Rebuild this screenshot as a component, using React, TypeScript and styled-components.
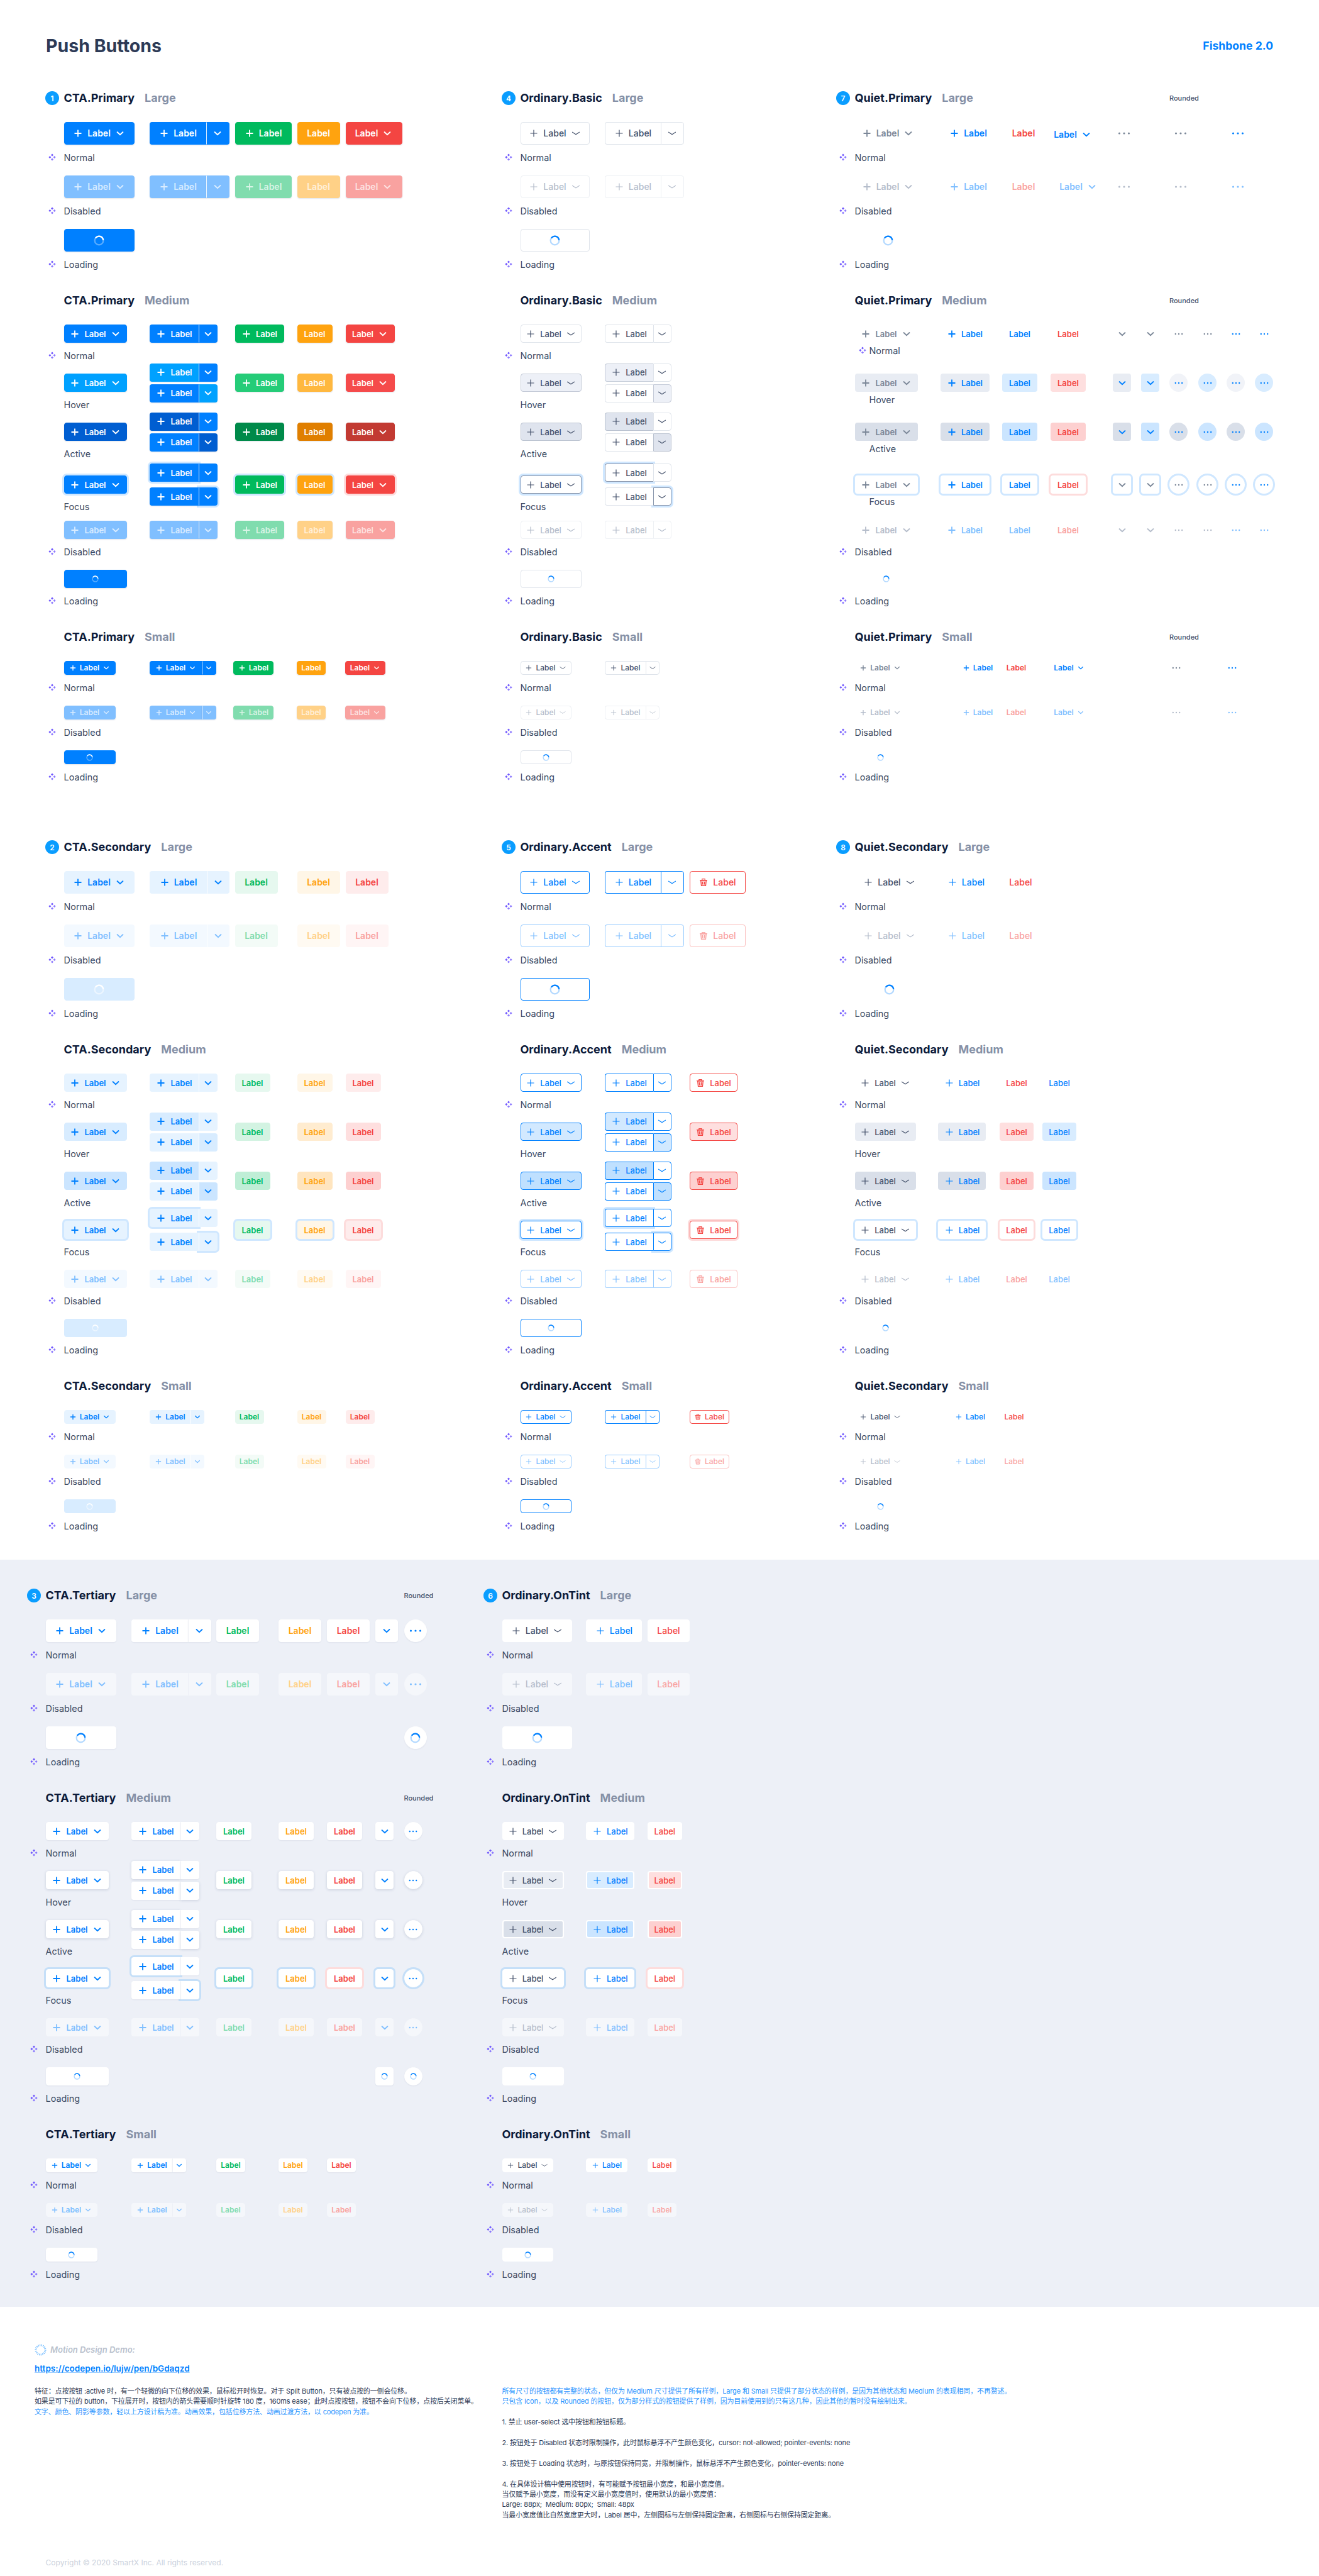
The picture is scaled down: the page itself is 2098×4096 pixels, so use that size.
import React from "react";
import styled, { createGlobalStyle } from "styled-components";

type Size = "large" | "medium" | "small";
type State = "normal" | "hover" | "active" | "focus" | "disabled" | "loading";
type Family = "cta" | "soft" | "white" | "basic" | "accent" | "quiet" | "quiet2" | "tint";
type Tone = "blue" | "green" | "orange" | "red" | "gray";
type Wash = Tone | "pale";

const sans = `Inter, "Noto Sans CJK SC", sans-serif`;

const tones = {
  blue: { main: "#0080ff", hover: "#00a1ff", press: "#005ed1", dim: "#80bfff", s0: "#e6f3ff", s1: "#d8ecff", s2: "#cbe5ff", s3: "#f3f9ff", ring: "#cfe7ff" },
  green: { main: "#00ba5d", hover: "#25cc78", press: "#008a4a", dim: "#80dcae", s0: "#e6f8ef", s1: "#d3f3e2", s2: "#bfeed6", s3: "#f3fbf7", ring: "#cfe7ff" },
  orange: { main: "#ffa30f", hover: "#ffb83f", press: "#e07f00", dim: "#ffd187", s0: "#fff6e7", s1: "#ffecd0", s2: "#ffe5bf", s3: "#fffaf2", ring: "#cfe7ff" },
  red: { main: "#f44542", hover: "#f54b4b", press: "#c23a32", dim: "#f9a2a0", s0: "#feecec", s1: "#fedfdf", s2: "#fdd0d0", s3: "#fff5f5", ring: "#fddcdc" },
  gray: { main: "#44516b", hover: "#e8ecf3", press: "#d9dfe9", dim: "#b5bdcb", s0: "#f1f3f8", s1: "#e8ecf3", s2: "#d9dfe9", s3: "#f5f7fb", ring: "#cfe7ff" },
};

const metrics = {
  large: { h: 36, font: 14, gap: 7, icon: 16, spin: 17 },
  medium: { h: 29, font: 13, gap: 7, icon: 16, spin: 11 },
  small: { h: 22, font: 12, gap: 5, icon: 12, spin: 11 },
};

interface Skin {
  bg: string;
  fg: string;
  bd: string;
  bw?: number;
  seam: string;
  ring?: string;
  shadow?: string;
  weight: number;
  thin?: boolean;
  spinTrack: string;
  spinArc: string;
}

const track = "#b3d9ff";
const softWash = (w: Wash, level: "s0" | "s1" | "s2") => {
  if (w === "pale") return level === "s1" ? "#f1f3f8" : "#d9dfe9";
  return tones[w][level];
};

const skin = (family: Family, tone: Tone, st: State, wash?: Wash): Skin => {
  const c = tones[tone];
  const ring = st === "focus" ? c.ring : undefined;
  switch (family) {
    case "cta": {
      const bg = st === "hover" ? c.hover : st === "active" ? c.press : st === "disabled" ? c.dim : c.main;
      return {
        bg,
        fg: st === "disabled" ? "rgba(255,255,255,.7)" : "#fff",
        bd: bg,
        seam: "rgba(255,255,255,.85)",
        ring,
        shadow: "0 1px 2px rgba(30,50,90,.14)",
        weight: 600,
        spinTrack: "rgba(255,255,255,.35)",
        spinArc: "#fff",
      };
    }
    case "soft": {
      const bg = st === "hover" ? c.s1 : st === "active" ? c.s2 : st === "disabled" ? c.s3 : st === "loading" ? c.s1 : c.s0;
      return { bg, fg: st === "disabled" ? c.dim : c.main, bd: bg, seam: "#fff", ring, weight: 600, spinTrack: "rgba(255,255,255,.5)", spinArc: "#fff" };
    }
    case "white": {
      const bg = st === "disabled" ? "#f5f7fb" : "#fff";
      return {
        bg,
        fg: st === "disabled" ? c.dim : c.main,
        bd: bg,
        seam: st === "disabled" ? "#edf0f7" : "#eef0f5",
        ring: st === "focus" ? (tone === "red" ? c.ring : "#c5dff8") : undefined,
        shadow: st === "hover" || st === "active" ? "0 1px 4px rgba(60,80,120,.2)" : st === "disabled" ? undefined : "0 1px 2px rgba(60,80,120,.08)",
        weight: 600,
        spinTrack: track,
        spinArc: tones.blue.main,
      };
    }
    case "basic": {
      const bg = st === "hover" ? "#edf0f7" : st === "active" ? "#dfe4ee" : "#fff";
      const bd = st === "hover" ? "#c4cbd8" : st === "active" ? "#bac2d0" : st === "focus" ? "#8a97ad" : st === "disabled" ? "#edf0f4" : "#dfe4eb";
      return { bg, fg: st === "disabled" ? "#b5bdcb" : "#44516b", bd, seam: bd, ring, weight: 500, thin: true, spinTrack: track, spinArc: tones.blue.main };
    }
    case "accent": {
      const bg = st === "hover" ? (tone === "red" ? c.s1 : "#d2e9ff") : st === "active" ? (tone === "red" ? c.s2 : "#bfe0ff") : "#fff";
      const bd = st === "disabled" ? (tone === "red" ? "#fbc0bf" : "#99ccff") : c.main;
      return { bg, fg: st === "disabled" ? c.dim : c.main, bd, seam: bd, ring, weight: 500, thin: true, spinTrack: track, spinArc: c.main };
    }
    case "tint": {
      const bg = st === "hover" ? (tone === "gray" ? "#e8ecf3" : c.s1) : st === "active" ? (tone === "gray" ? "#d9dfe9" : c.s2) : st === "disabled" ? "#f5f7fb" : "#fff";
      const hovered = st === "hover" || st === "active";
      return { bg, fg: st === "disabled" ? c.dim : c.main, bd: hovered ? "#fff" : bg, bw: hovered ? 2 : 1, seam: bg, ring: st === "focus" ? (tone === "red" ? c.ring : "#c5dff8") : undefined, weight: 500, thin: true, spinTrack: track, spinArc: tones.blue.main };
    }
    default: {
      const w = wash || tone;
      const bg = st === "hover" ? softWash(w, "s1") : st === "active" ? softWash(w, "s2") : st === "focus" ? "#fff" : "transparent";
      const soft = family === "quiet2";
      const ink = tone === "gray" ? (soft ? "#44516b" : "#7b8798") : c.main;
      return { bg, fg: st === "disabled" ? c.dim : ink, bd: "transparent", seam: "transparent", ring, weight: soft ? 500 : 600, thin: soft, spinTrack: track, spinArc: tones.blue.main };
    }
  }
};

const GlobalStyle = createGlobalStyle`
  html, body {
    margin: 0;
    padding: 0;
    background: #fff;
    font-family: ${sans};
  }
`;

const Page = styled.div`
  width: 2098px;
  height: 4096px;
  overflow: hidden;
  color: #44516b;
`;

const Header = styled.header`
  box-sizing: border-box;
  height: 144px;
  padding: 54px 73px 0;
  display: flex;
  justify-content: space-between;
  align-items: flex-start;
`;

const PageTitle = styled.h1`
  margin: 0;
  font-size: 28.5px;
  line-height: 38px;
  font-weight: 700;
  color: #2d3a56;
`;

const Brand = styled.div`
  font-size: 17.6px;
  line-height: 38px;
  font-weight: 700;
  color: #0080ff;
`;

const Columns = styled.div<{ $top?: number }>`
  display: grid;
  grid-template-columns: 726px 532px 1fr;
  padding-left: 72px;
  margin-top: ${(p) => p.$top || 0}px;
`;

const TintBand = styled.section`
  margin-top: 25px;
  padding: 45px 0 23px 43px;
  background: #edf0f7;
  display: grid;
  grid-template-columns: 726px 1fr;
`;

const Family = styled.div`
  display: flex;
  flex-direction: column;
  gap: 17px;
`;

const HeadRow = styled.div`
  display: grid;
  grid-template-columns: 22px 1fr;
  column-gap: 7.5px;
  height: 24px;
  margin-bottom: 26px;
  align-items: center;
`;

const Badge = styled.span`
  width: 22px;
  height: 22px;
  border-radius: 50%;
  background: #0a9dff;
  color: #fff;
  font-size: 12px;
  font-weight: 600;
  display: flex;
  align-items: center;
  justify-content: center;
`;

const HeadText = styled.div<{ $roundedAt?: number }>`
  grid-column: 2;
  display: grid;
  grid-template-columns: ${(p) => (p.$roundedAt ? `${p.$roundedAt}px auto` : "1fr")};
  align-items: center;
`;

const HeadTitle = styled.div`
  display: flex;
  gap: 16px;
  white-space: nowrap;
  font-size: 18px;
  line-height: 24px;
  font-weight: 700;
`;

const TitleMain = styled.span`
  color: #0d1b3a;
`;

const TitleSize = styled.span`
  color: #8590a6;
`;

const RoundedNote = styled.span`
  font-size: 11px;
  font-weight: 500;
  color: #44516b;
`;

const Row = styled.div<{ $h: number; $before?: number }>`
  display: grid;
  grid-template-columns: 22px 1fr;
  grid-template-rows: ${(p) => p.$h}px auto;
  column-gap: 7.5px;
  height: ${(p) => p.$h + 49}px;
  margin-top: ${(p) => p.$before || 0}px;
`;

const Cells = styled.div<{ $cols: string; $h: number }>`
  grid-column: 2;
  grid-row: 1;
  display: grid;
  grid-template-columns: ${(p) => p.$cols};
  grid-template-rows: ${(p) => p.$h}px;
  align-items: center;
  justify-items: start;
  height: ${(p) => p.$h}px;
`;

const MarkSlot = styled.div`
  grid-column: 1;
  grid-row: 2;
  display: flex;
  align-items: center;
  justify-content: center;
  height: 24px;
  margin-top: 8px;
`;

const StateText = styled.div<{ $indent?: boolean; $tight?: boolean; $marked?: boolean }>`
  grid-column: 2;
  grid-row: 2;
  display: flex;
  align-items: center;
  gap: 5px;
  height: 24px;
  margin-top: ${(p) => (p.$tight ? 0 : 8)}px;
  padding-left: ${(p) => (p.$indent ? (p.$marked ? 6 : 23) : 0)}px;
  font-size: 14.4px;
  color: #3c4a63;
`;

const Blank = styled.i``;

const Push = styled.button<{
  $skin: Skin;
  $w: number;
  $size: Size;
  $corner: "all" | "left" | "right" | "round";
  $dx?: number;
  $dy?: number;
}>`
  box-sizing: border-box;
  flex: none;
  position: relative;
  z-index: ${(p) => (p.$skin.ring ? 0 : 1)};
  display: inline-flex;
  align-items: center;
  justify-content: center;
  gap: ${(p) => metrics[p.$size].gap}px;
  width: ${(p) => p.$w}px;
  height: ${(p) => metrics[p.$size].h}px;
  padding: 0;
  border: ${(p) => p.$skin.bw || 1}px solid ${(p) => p.$skin.bd};
  border-radius: ${(p) =>
    p.$corner === "round" ? "50%" : p.$corner === "left" ? "4px 0 0 4px" : p.$corner === "right" ? "0 4px 4px 0" : "4px"};
  ${(p) => (p.$corner === "left" ? "border-right: 0;" : "")}
  ${(p) => (p.$corner === "right" ? `border-left-color: ${p.$skin.seam};` : "")}
  background: ${(p) => p.$skin.bg};
  color: ${(p) => p.$skin.fg};
  font-family: ${sans};
  font-size: ${(p) => metrics[p.$size].font}px;
  font-weight: ${(p) => p.$skin.weight};
  line-height: 16px;
  box-shadow: ${(p) => (p.$skin.ring ? `0 0 0 3px ${p.$skin.ring}` : p.$skin.shadow || "none")};
  transform: translate(${(p) => p.$dx || 0}px, ${(p) => p.$dy || 0}px);
`;

const SplitBox = styled.div`
  display: inline-flex;
`;

const Stack = styled.div<{ $gap: number }>`
  display: flex;
  flex-direction: column;
  gap: ${(p) => p.$gap}px;
`;

const Marker = () => (
  <svg width="12" height="12" viewBox="0 0 12 12">
    <g fill="#7058ff">
      <path d="M6 .4 8 2.4 6 4.4 4 2.4z" />
      <path d="M2.4 4 4.4 6 2.4 8 .4 6z" />
      <path d="M9.6 4 11.6 6 9.6 8 7.6 6z" opacity=".8" />
      <path d="M6 7.6 8 9.6 6 11.6 4 9.6z" opacity=".8" />
    </g>
  </svg>
);

const Plus = ({ size, thin }: { size: number; thin?: boolean }) => (
  <svg width={size} height={size} viewBox="0 0 16 16" fill="none" stroke="currentColor" strokeWidth={thin ? 1.2 : 1.8}>
    <path d="M8 2.5v11M2.5 8h11" />
  </svg>
);

const Chevron = ({ size, thin }: { size: number; thin?: boolean }) => (
  <svg width={size} height={size} viewBox="0 0 16 16" fill="none" stroke="currentColor" strokeWidth={thin ? 1.1 : 1.8} strokeLinecap="round">
    <path d={thin ? "M2.5 6.2 8 9.8l5.5-3.6" : "M3.5 6 8 10.2 12.5 6"} />
  </svg>
);

const Trash = ({ size }: { size: number }) => (
  <svg width={size} height={size} viewBox="0 0 16 16" fill="none" stroke="currentColor" strokeWidth="1.2">
    <path d="M2 4.6h12M5.8 4.4V2.6h4.4v1.8" />
    <path d="M3.6 4.8l.9 8.6h7l.9-8.6z" fill="currentColor" fillOpacity=".25" />
    <path d="M6.4 7l.2 4.4M9.6 7l-.2 4.4" />
  </svg>
);

const Dots = ({ large }: { large?: boolean }) =>
  large ? (
    <svg width="20" height="6" viewBox="0 0 20 6" fill="currentColor">
      <circle cx="2.5" cy="3" r="1.6" />
      <circle cx="10" cy="3" r="1.6" />
      <circle cx="17.5" cy="3" r="1.6" />
    </svg>
  ) : (
    <svg width="14" height="4" viewBox="0 0 14 4" fill="currentColor">
      <circle cx="1.8" cy="2" r="1.2" />
      <circle cx="7" cy="2" r="1.2" />
      <circle cx="12.2" cy="2" r="1.2" />
    </svg>
  );

const Spinner = ({ size, tint, arc }: { size: number; tint: string; arc: string }) => (
  <svg width={size} height={size} viewBox="0 0 18 18" fill="none" strokeWidth="2.4">
    <circle cx="9" cy="9" r="7.2" stroke={tint} />
    <path d="M3.6 4.2A7.2 7.2 0 0 1 16 7.4" stroke={arc} strokeLinecap="round" />
  </svg>
);

interface BtnProps {
  family: Family;
  tone?: Tone;
  st?: State;
  size: Size;
  w: number;
  plus?: boolean;
  caret?: boolean;
  trash?: boolean;
  dots?: boolean;
  icon?: boolean;
  round?: boolean;
  corner?: "left" | "right";
  wash?: Wash;
  dx?: number;
  dy?: number;
}

const Btn = ({ family, tone = "blue", st = "normal", size, w, plus, caret, trash, dots, icon, round, corner, wash, dx, dy }: BtnProps) => {
  const s = skin(family, tone, st, wash);
  const m = metrics[size];
  return (
    <Push $skin={s} $w={w} $size={size} $corner={round ? "round" : corner || "all"} $dx={dx} $dy={dy}>
      {st === "loading" ? (
        <Spinner size={m.spin} tint={s.spinTrack} arc={s.spinArc} />
      ) : (
        <>
          {plus && <Plus size={m.icon} thin={s.thin} />}
          {trash && <Trash size={m.icon} />}
          {!icon && !dots && "Label"}
          {caret && <Chevron size={m.icon} thin={s.thin} />}
          {dots && <Dots large={size === "large"} />}
        </>
      )}
    </Push>
  );
};

interface SplitProps {
  family: Family;
  size: Size;
  left: number;
  right: number;
  inner?: boolean;
  leftSt?: State;
  rightSt?: State;
}

const Split = ({ family, size, left, right, inner, leftSt = "normal", rightSt = "normal" }: SplitProps) => (
  <SplitBox>
    <Btn family={family} size={size} w={left} st={leftSt} corner="left" plus caret={inner} tone={family === "basic" ? "gray" : "blue"} />
    <Btn family={family} size={size} w={right} st={rightSt} corner="right" icon caret tone={family === "basic" ? "gray" : "blue"} />
  </SplitBox>
);

const splitCell = (family: Family, size: Size, left: number, right: number, st: State, inner?: boolean) => {
  if (st === "hover" || st === "active" || st === "focus") {
    return (
      <Stack $gap={st === "focus" ? 9 : 4}>
        <Split family={family} size={size} left={left} right={right} inner={inner} leftSt={st} />
        <Split family={family} size={size} left={left} right={right} inner={inner} rightSt={st} />
      </Stack>
    );
  }
  return <Split family={family} size={size} left={left} right={right} inner={inner} leftSt={st} rightSt={st} />;
};

interface RowSpec {
  st: State;
  cells: React.ReactNode[];
  before?: number;
  indent?: boolean;
  tight?: boolean;
}

const stateNames: Record<State, string> = {
  normal: "Normal",
  hover: "Hover",
  active: "Active",
  focus: "Focus",
  disabled: "Disabled",
  loading: "Loading",
};

const marked = (st: State) => st === "normal" || st === "disabled" || st === "loading";

interface SubProps {
  title: string;
  size: Size;
  badge?: number;
  roundedAt?: number;
  cols: number[];
  rows: RowSpec[];
}

const sizeNames: Record<Size, string> = { large: "Large", medium: "Medium", small: "Small" };

const Sub = ({ title, size, badge, roundedAt, cols, rows }: SubProps) => (
  <div>
    <HeadRow>
      {badge ? <Badge>{badge}</Badge> : <Blank />}
      <HeadText $roundedAt={roundedAt}>
        <HeadTitle>
          <TitleMain>{title}</TitleMain>
          <TitleSize>{sizeNames[size]}</TitleSize>
        </HeadTitle>
        {roundedAt ? <RoundedNote>Rounded</RoundedNote> : null}
      </HeadText>
    </HeadRow>
    {rows.map((r) => (
      <Row key={r.st} $h={metrics[size].h} $before={r.before}>
        <Cells $h={metrics[size].h} $cols={cols.map((c) => `${c}px`).join(" ")}>
          {r.cells.map((c, i) => (
            <React.Fragment key={i}>{c}</React.Fragment>
          ))}
        </Cells>
        {marked(r.st) && !r.indent && (
          <MarkSlot>
            <Marker />
          </MarkSlot>
        )}
        <StateText $indent={r.indent} $tight={r.tight} $marked={marked(r.st)}>
          {r.indent && marked(r.st) && <Marker />}
          {stateNames[r.st]}
        </StateText>
      </Row>
    ))}
  </div>
);

const shortStates: State[] = ["normal", "disabled", "loading"];
const allStates: State[] = ["normal", "hover", "active", "focus", "disabled", "loading"];
const statesOf = (size: Size) => (size === "medium" ? allStates : shortStates);

// the first block of each column has the focus row pushed down a little
const focusShift = (st: State) => (st === "focus" ? 6 : st === "disabled" ? -6 : 0);

const ctaDims = {
  cta: {
    large: { cols: [136, 136, 99, 77, 90], a: 112, l: 90, r: 37, g: 90, o: 68, e: 90 },
    medium: { cols: [136, 136, 99, 77, 78], a: 100, l: 78, r: 30, g: 78, o: 56, e: 78 },
    small: { cols: [136, 133.5, 101, 77, 64], a: 82, l: 83, r: 23, g: 64, o: 46, e: 64 },
  },
  soft: {
    large: { cols: [136, 136, 99, 77, 68], a: 112, l: 91, r: 36, g: 68, o: 68, e: 68 },
    medium: { cols: [136, 136, 99, 77, 56], a: 100, l: 78, r: 30, g: 56, o: 56, e: 56 },
    small: { cols: [136, 136, 99, 77, 46], a: 82, l: 65, r: 22, g: 46, o: 46, e: 46 },
  },
  white: {
    large: { cols: [136, 135.5, 99, 77, 77, 45.5, 40], a: 112, l: 90, r: 37, g: 68, o: 68, e: 68, x: 36 },
    medium: { cols: [136, 135.5, 99, 77, 77, 45.5, 40], a: 100, l: 78, r: 30, g: 56, o: 56, e: 56, x: 29 },
    small: { cols: [136, 135.5, 99, 77, 46], a: 82, l: 65, r: 22, g: 46, o: 46, e: 46 },
  },
};

const ctaRows = (family: "cta" | "soft" | "white", size: Size, shifted?: boolean): RowSpec[] =>
  statesOf(size).map((st) => {
    const d = ctaDims[family][size] as { cols: number[]; a: number; l: number; r: number; g: number; o: number; e: number; x?: number };
    const before = shifted ? focusShift(st) : 0;
    const solid = family === "cta";
    if (st === "loading") {
      const cells: React.ReactNode[] = [<Btn family={family} size={size} w={d.a} st={st} />];
      if (d.x) {
        cells.push(<Blank />, <Blank />, <Blank />, <Blank />);
        cells.push(size === "medium" ? <Btn family={family} size={size} w={d.x} st={st} icon /> : <Blank />);
        cells.push(<Btn family={family} size={size} w={d.x} st={st} round />);
      }
      return { st, cells, before };
    }
    const cells: React.ReactNode[] = [
      <Btn family={family} size={size} w={d.a} st={st} plus caret />,
      splitCell(family, size, d.l, d.r, st, solid && size === "small"),
      <Btn family={family} tone="green" size={size} w={d.g} st={st} plus={solid} />,
      <Btn family={family} tone="orange" size={size} w={d.o} st={st} />,
      <Btn family={family} tone="red" size={size} w={d.e} st={st} caret={solid} />,
    ];
    if (d.x) {
      cells.push(<Btn family={family} size={size} w={d.x} st={st} icon caret />);
      cells.push(<Btn family={family} size={size} w={d.x} st={st} dots round />);
    }
    return { st, cells, before };
  });

const ordDims = {
  large: { cols: [134, 135, 89], a: 110, l: 89, r: 37, t: 89 },
  medium: { cols: [134, 135, 76], a: 97, l: 77, r: 29, t: 76 },
  small: { cols: [134, 135, 63], a: 81, l: 65, r: 22, t: 63 },
};

const ordinaryRows = (family: "basic" | "accent", size: Size, shifted?: boolean): RowSpec[] =>
  statesOf(size).map((st) => {
    const d = ordDims[size];
    const tone: Tone = family === "basic" ? "gray" : "blue";
    const before = shifted ? focusShift(st) : 0;
    if (st === "loading") return { st, before, cells: [<Btn family={family} tone={tone} size={size} w={d.a} st={st} />] };
    const cells: React.ReactNode[] = [
      <Btn family={family} tone={tone} size={size} w={d.a} st={st} plus caret />,
      splitCell(family, size, d.l, d.r, st),
    ];
    if (family === "accent") cells.push(<Btn family={family} tone="red" size={size} w={d.t} st={st} trash />);
    return { st, before, cells };
  });

const tintDims = {
  large: { cols: [133.5, 98, 70], a: 111, b: 89, c: 67 },
  medium: { cols: [133.5, 98, 70], a: 98, b: 76.5, c: 54.5 },
  small: { cols: [133.5, 98, 70], a: 81, b: 66, c: 46 },
};

const tintRows = (size: Size): RowSpec[] =>
  statesOf(size).map((st) => {
    const d = tintDims[size];
    if (st === "loading") return { st, cells: [<Btn family="tint" tone="gray" size={size} w={d.a} st={st} />] };
    return {
      st,
      cells: [
        <Btn family="tint" tone="gray" size={size} w={d.a} st={st} plus caret />,
        <Btn family="tint" tone="blue" size={size} w={d.b} st={st} plus />,
        <Btn family="tint" tone="red" size={size} w={d.c} st={st} />,
      ],
    };
  });

const quietLargeRows: RowSpec[] = shortStates.map((st) => {
  const q = "quiet" as Family;
  if (st === "loading") return { st, cells: [<Btn family={q} tone="gray" size="large" w={105} st={st} />] };
  const normal = st === "normal";
  return {
    st,
    cells: [
      <Btn family={q} tone="gray" size="large" w={105} st={st} plus caret />,
      <Btn family={q} size="large" w={80} st={st} plus />,
      <Btn family={q} tone="red" size="large" w={56} st={st} />,
      <Btn family={q} size="large" w={80} st={st} caret dx={normal ? 0 : 9} dy={normal ? 2 : 0} />,
      <Btn family={q} tone="gray" size="large" w={36} st={st} dots />,
      <Btn family={q} tone="gray" size="large" w={36} st={st} dots />,
      <Btn family={q} size="large" w={36} st={st} dots />,
    ],
  };
});

const quietMediumRows: RowSpec[] = allStates.map((st) => {
  const q = "quiet" as Family;
  const size: Size = "medium";
  const lit = st === "hover" || st === "active";
  const iconTone: Tone = lit ? "blue" : "gray";
  const base = { st, before: focusShift(st), indent: st === "normal" || st === "hover" || st === "active" || st === "focus", tight: st === "normal" || st === "hover" || st === "active" || st === "focus" };
  if (st === "loading") return { ...base, cells: [<Btn family={q} tone="gray" size={size} w={100} st={st} />] };
  return {
    ...base,
    cells: [
      <Btn family={q} tone="gray" size={size} w={100} st={st} plus caret />,
      <Btn family={q} tone="blue" wash="gray" size={size} w={78} st={st} plus />,
      <Btn family={q} tone="blue" size={size} w={56} st={st} />,
      <Btn family={q} tone="red" size={size} w={56} st={st} />,
      <Btn family={q} tone={iconTone} wash="gray" size={size} w={29} st={st} icon caret />,
      <Btn family={q} tone={iconTone} wash="blue" size={size} w={29} st={st} icon caret />,
      <Btn family={q} tone={iconTone} wash="pale" size={size} w={29} st={st} dots round />,
      <Btn family={q} tone={iconTone} wash="blue" size={size} w={29} st={st} dots round />,
      <Btn family={q} tone="blue" wash="pale" size={size} w={29} st={st} dots round />,
      <Btn family={q} tone="blue" wash="blue" size={size} w={29} st={st} dots round />,
    ],
  };
});

const quietSmallRows: RowSpec[] = shortStates.map((st) => {
  const q = "quiet" as Family;
  const size: Size = "small";
  if (st === "loading") return { st, cells: [<Btn family={q} tone="gray" size={size} w={81} st={st} />] };
  return {
    st,
    cells: [
      <Btn family={q} tone="gray" size={size} w={81} st={st} plus caret />,
      <Btn family={q} size={size} w={66} st={st} plus />,
      <Btn family={q} tone="red" size={size} w={46} st={st} />,
      <Btn family={q} size={size} w={66} st={st} caret />,
      <Btn family={q} tone="gray" size={size} w={22} st={st} dots />,
      <Btn family={q} size={size} w={22} st={st} dots />,
    ],
  };
});

const quiet2Rows = (size: Size): RowSpec[] =>
  statesOf(size).map((st) => {
    const q = "quiet2" as Family;
    const w = size === "large" ? [110, 89, 67] : size === "medium" ? [97, 76, 54, 54] : [81, 66, 46];
    if (st === "loading") return { st, cells: [<Btn family={q} tone="gray" size={size} w={w[0]} st={st} />] };
    const cells: React.ReactNode[] = [
      <Btn family={q} tone="gray" size={size} w={w[0]} st={st} plus caret />,
      <Btn family={q} tone="blue" wash="gray" size={size} w={w[1]} st={st} plus />,
      <Btn family={q} tone="red" size={size} w={w[2]} st={st} />,
    ];
    if (size === "medium") cells.push(<Btn family={q} tone="blue" size={size} w={w[3]} st={st} />);
    return { st, cells };
  });

const FooterGrid = styled.footer`
  display: grid;
  grid-template-columns: 743.5px 1fr;
  padding: 58px 0 0 55px;
`;

const MotionRow = styled.div`
  display: flex;
  align-items: center;
  gap: 6px;
  height: 20px;
`;

const MotionText = styled.span`
  font-size: 13px;
  font-weight: 600;
  font-style: italic;
  color: #b8c0cc;
`;

const DemoLink = styled.a`
  display: block;
  margin-top: 10px;
  font-size: 13.5px;
  line-height: 20px;
  font-weight: 600;
  color: #0080ff;
  text-decoration: underline;
  text-decoration-color: #99ccff;
`;

const Notes = styled.div<{ $top: number }>`
  margin-top: ${(p) => p.$top}px;
  font-size: 11px;
  line-height: 16.4px;
  letter-spacing: -0.15px;
  color: #2d3a56;
  white-space: nowrap;
`;

const Para = styled.p<{ $accent?: boolean }>`
  margin: 0 0 16.4px;
  color: ${(p) => (p.$accent ? "#2b95ff" : "inherit")};
`;

const Line = styled.span<{ $accent?: boolean }>`
  display: block;
  color: ${(p) => (p.$accent ? "#2b95ff" : "inherit")};
`;

const Copyright = styled.div`
  margin: 43px 0 0 72.6px;
  font-size: 12px;
  line-height: 16px;
  color: #cbd1dc;
`;

const MotionIcon = () => (
  <svg width="19" height="19" viewBox="0 0 19 19" fill="none">
    <circle cx="9.5" cy="9.5" r="7.5" stroke="#5ab0ff" strokeWidth="3" strokeDasharray="1 1.6" />
  </svg>
);

export default function App() {
  return (
    <Page>
      <GlobalStyle />
      <Header>
        <PageTitle>Push Buttons</PageTitle>
        <Brand>Fishbone 2.0</Brand>
      </Header>

      <Columns>
        <Family>
          <Sub title="CTA.Primary" size="large" badge={1} cols={ctaDims.cta.large.cols} rows={ctaRows("cta", "large")} />
          <Sub title="CTA.Primary" size="medium" cols={ctaDims.cta.medium.cols} rows={ctaRows("cta", "medium", true)} />
          <Sub title="CTA.Primary" size="small" cols={ctaDims.cta.small.cols} rows={ctaRows("cta", "small")} />
        </Family>
        <Family>
          <Sub title="Ordinary.Basic" size="large" badge={4} cols={ordDims.large.cols} rows={ordinaryRows("basic", "large")} />
          <Sub title="Ordinary.Basic" size="medium" cols={ordDims.medium.cols} rows={ordinaryRows("basic", "medium", true)} />
          <Sub title="Ordinary.Basic" size="small" cols={ordDims.small.cols} rows={ordinaryRows("basic", "small")} />
        </Family>
        <Family>
          <Sub title="Quiet.Primary" size="large" badge={7} roundedAt={500.5} cols={[140.5, 100, 66, 104, 90, 91, 36]} rows={quietLargeRows} />
          <Sub title="Quiet.Primary" size="medium" roundedAt={500.5} cols={[136, 98.5, 77, 99, 45, 45, 46, 45, 45, 30]} rows={quietMediumRows} />
          <Sub title="Quiet.Primary" size="small" roundedAt={500.5} cols={[162.5, 71.5, 74, 192, 89, 22]} rows={quietSmallRows} />
        </Family>
      </Columns>

      <Columns $top={71}>
        <Family>
          <Sub title="CTA.Secondary" size="large" badge={2} cols={ctaDims.soft.large.cols} rows={ctaRows("soft", "large")} />
          <Sub title="CTA.Secondary" size="medium" cols={ctaDims.soft.medium.cols} rows={ctaRows("soft", "medium")} />
          <Sub title="CTA.Secondary" size="small" cols={ctaDims.soft.small.cols} rows={ctaRows("soft", "small")} />
        </Family>
        <Family>
          <Sub title="Ordinary.Accent" size="large" badge={5} cols={ordDims.large.cols} rows={ordinaryRows("accent", "large")} />
          <Sub title="Ordinary.Accent" size="medium" cols={ordDims.medium.cols} rows={ordinaryRows("accent", "medium")} />
          <Sub title="Ordinary.Accent" size="small" cols={ordDims.small.cols} rows={ordinaryRows("accent", "small")} />
        </Family>
        <Family>
          <Sub title="Quiet.Secondary" size="large" badge={8} cols={[132.5, 98, 80]} rows={quiet2Rows("large")} />
          <Sub title="Quiet.Secondary" size="medium" cols={[132.5, 98, 68, 60]} rows={quiet2Rows("medium")} />
          <Sub title="Quiet.Secondary" size="small" cols={[150.5, 80, 60]} rows={quiet2Rows("small")} />
        </Family>
      </Columns>

      <TintBand>
        <Family>
          <Sub title="CTA.Tertiary" size="large" badge={3} roundedAt={570} cols={ctaDims.white.large.cols} rows={ctaRows("white", "large")} />
          <Sub title="CTA.Tertiary" size="medium" roundedAt={570} cols={ctaDims.white.medium.cols} rows={ctaRows("white", "medium")} />
          <Sub title="CTA.Tertiary" size="small" cols={ctaDims.white.small.cols} rows={ctaRows("white", "small")} />
        </Family>
        <Family>
          <Sub title="Ordinary.OnTint" size="large" badge={6} cols={tintDims.large.cols} rows={tintRows("large")} />
          <Sub title="Ordinary.OnTint" size="medium" cols={tintDims.medium.cols} rows={tintRows("medium")} />
          <Sub title="Ordinary.OnTint" size="small" cols={tintDims.small.cols} rows={tintRows("small")} />
        </Family>
      </TintBand>

      <FooterGrid>
        <div>
          <MotionRow>
            <MotionIcon />
            <MotionText>Motion Design Demo:</MotionText>
          </MotionRow>
          <DemoLink href="#">https://codepen.io/lujw/pen/bGdaqzd</DemoLink>
          <Notes $top={18}>
            <Line>特征：点按按钮 :active 时，有一个轻微的向下位移的效果，鼠标松开时恢复。对于 Split Button，只有被点按的一侧会位移。</Line>
            <Line>如果是可下拉的 button，下拉展开时，按钮内的箭头需要顺时针旋转 180 度，160ms ease；此时点按按钮，按钮不会向下位移，点按后关闭菜单。</Line>
            <Line $accent>文字、颜色、阴影等参数，轻以上方设计稿为准。动画效果，包括位移方法、动画过渡方法，以 codepen 为准。</Line>
          </Notes>
        </div>
        <Notes $top={68}>
          <Para $accent>
            <Line>所有尺寸的按钮都有完整的状态，但仅为 Medium 尺寸提供了所有样例，Large 和 Small 只提供了部分状态的样例，是因为其他状态和 Medium 的表现相同，不再赘述。</Line>
            <Line>只包含 Icon，以及 Rounded 的按钮，仅为部分样式的按钮提供了样例，因为目前使用到的只有这几种，因此其他的暂时没有绘制出来。</Line>
          </Para>
          <Para>1. 禁止 user-select 选中按钮和按钮标题。</Para>
          <Para>2. 按钮处于 Disabled 状态时限制操作，此时鼠标悬浮不产生颜色变化，cursor: not-allowed; pointer-events: none</Para>
          <Para>3. 按钮处于 Loading 状态时，与原按钮保持同宽，并限制操作，鼠标悬浮不产生颜色变化，pointer-events: none</Para>
          <Para>
            <Line>4. 在具体设计稿中使用按钮时，有可能赋予按钮最小宽度，和最小宽度值。</Line>
            <Line>当仅赋予最小宽度，而没有定义最小宽度值时，使用默认的最小宽度值：</Line>
            <Line>Large: 88px;&nbsp; Medium: 80px;&nbsp; Small: 48px</Line>
            <Line>当最小宽度值比自然宽度更大时，Label 居中，左侧图标与左侧保持固定距离，右侧图标与右侧保持固定距离。</Line>
          </Para>
        </Notes>
      </FooterGrid>
      <Copyright>Copyright © 2020 SmartX Inc. All rights reserved.</Copyright>
    </Page>
  );
}
